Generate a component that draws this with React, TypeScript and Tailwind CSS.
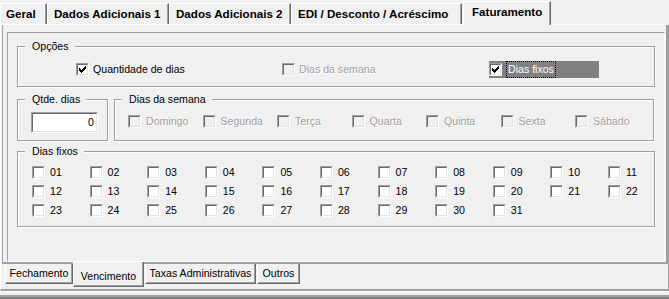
import React from "react";

const CHECK_PATH =
  "M7 1h1v1h-1zM6 2h2v1h-2zM1 3h1v1h-1zM5 3h3v1h-3zM1 4h2v1h-2zM4 4h3v1h-3zM1 5h5v1h-5zM2 6h3v1h-3zM3 7h1v1h-1z";

function CheckBox({ checked = false, disabled = false }: { checked?: boolean; disabled?: boolean }) {
  return (
    <span className="block w-[13px] h-[13px] shrink-0 border border-t-[#a0a0a0] border-l-[#a0a0a0] border-b-white border-r-white">
      <span
        className={`block w-[11px] h-[11px] border border-t-[#696969] border-l-[#696969] border-b-[#e3e3e3] border-r-[#e3e3e3] ${
          disabled ? "bg-[#f0f0f0]" : "bg-white"
        }`}
      >
        {checked && (
          <svg width="9" height="9" viewBox="0 0 9 9" shapeRendering="crispEdges" className="block">
            <path d={CHECK_PATH} fill="#000" />
          </svg>
        )}
      </span>
    </span>
  );
}

function Group({
  label,
  className,
  children,
}: {
  label: string;
  className: string;
  children?: React.ReactNode;
}) {
  return (
    <div
      className={`relative shrink-0 border border-[#a0a0a0] shadow-[inset_1px_1px_0_#fff,1px_1px_0_#fff] ${className}`}
    >
      <span className="absolute left-[7px] -top-[7px] bg-[#f0f0f0] pl-[7px] pr-[6px] leading-[13px] whitespace-nowrap">
        {label}
      </span>
      {children}
    </div>
  );
}

const disabledText = "text-[#a0a0a0] [text-shadow:1px_1px_0_#fff]";

const topTabs = [
  { label: "Geral", cls: "w-[47px] pl-[5px]" },
  { label: "Dados Adicionais 1", cls: "w-[122px] pl-[6px]" },
  { label: "Dados Adicionais 2", cls: "w-[122px] pl-[6px]" },
  { label: "EDI / Desconto / Acréscimo", cls: "w-[171px] pl-[6px]" },
];

const weekDays = ["Domingo", "Segunda", "Terça", "Quarta", "Quinta", "Sexta", "Sábado"];
const days = Array.from({ length: 31 }, (_, i) => String(i + 1).padStart(2, "0"));

export default function App() {
  return (
    <div className="w-[669px] h-[299px] overflow-hidden bg-[#f0f0f0] text-black font-['Liberation_Sans',Arial,sans-serif] text-[10.6px] leading-[13px] select-none">
      {/* top tabs */}
      <div className="flex h-[24px] items-end">
        {topTabs.map((t) => (
          <div
            key={t.label}
            className={`h-[21px] shrink-0 border-t border-l border-r border-t-white border-l-white border-r-[#696969] shadow-[inset_-1px_0_0_#a0a0a0] font-bold text-[11.6px] leading-[14px] pt-[3px] whitespace-nowrap ${t.cls}`}
          >
            {t.label}
          </div>
        ))}
        <div className="relative z-10 -mb-[1px] ml-[1px] h-[24px] w-[88px] shrink-0 bg-[#f0f0f0] border-t border-l border-r border-t-white border-l-white border-r-[#696969] shadow-[inset_-1px_0_0_#a0a0a0] font-bold text-[11.6px] leading-[14px] pt-[3px] pl-[8px] whitespace-nowrap">
          Faturamento
        </div>
      </div>

      {/* outer panel */}
      <div className="h-[267px] border-t border-l border-r border-b-2 border-t-white border-l-white border-r-[#a0a0a0] border-b-[#a0a0a0]">
        {/* inner page body */}
        <div className="ml-[1px] w-[666px] h-[239px] border-l border-r-2 border-b-2 border-l-[#a0a0a0] border-r-[#a0a0a0] border-b-[#a0a0a0] pl-[4px] pt-[7px]">
          <div className="w-[658px] h-[230px] border border-t-[#a0a0a0] border-l-[#a0a0a0] border-b-white border-r-white pl-[9px] pt-[13px]">
            {/* Opções */}
            <Group label="Opções" className="w-[638px] h-[41px]">
              <div className="mt-[14px] ml-[58px] h-[17px] grid grid-cols-[206px_207px_110px] items-center">
                <div className="flex items-center">
                  <CheckBox checked />
                  <span className="ml-[4px] whitespace-nowrap">Quantidade de dias</span>
                </div>
                <div className="flex items-center">
                  <CheckBox disabled />
                  <span className={`ml-[4px] whitespace-nowrap ${disabledText}`}>Dias da semana</span>
                </div>
                <div className="flex items-center h-[17px] w-[110px] bg-[#808080]">
                  <CheckBox checked />
                  <span className="ml-[4px] h-[17px] flex items-center border border-dotted border-black px-[1px] text-white whitespace-nowrap">
                    Dias fixos
                  </span>
                </div>
              </div>
            </Group>

            {/* Qtde + Dias da semana */}
            <div className="mt-[12px] flex gap-[6px]">
              <Group label="Qtde. dias" className="w-[91px] h-[42px]">
                <div className="mt-[12px] ml-[13px] w-[67px] h-[21px] border border-t-[#a0a0a0] border-l-[#a0a0a0] border-b-white border-r-white">
                  <div className="h-full w-full border border-t-[#696969] border-l-[#696969] border-b-[#e3e3e3] border-r-[#e3e3e3] bg-white flex items-center justify-end pr-[2px]">
                    0
                  </div>
                </div>
              </Group>
              <Group label="Dias da semana" className="w-[540px] h-[42px]">
                <div className="mt-[15px] ml-[13px] grid grid-cols-[repeat(7,74.5px)]">
                  {weekDays.map((d) => (
                    <div key={d} className="flex items-center">
                      <CheckBox disabled />
                      <span className={`ml-[5px] whitespace-nowrap ${disabledText}`}>{d}</span>
                    </div>
                  ))}
                </div>
              </Group>
            </div>

            {/* Dias fixos */}
            <Group label="Dias fixos" className="mt-[10px] w-[638px] h-[76px]">
              <div className="mt-[14px] ml-[14px] grid grid-cols-[repeat(11,57.6px)] gap-y-[6px]">
                {days.map((d) => (
                  <div key={d} className="flex items-center h-[13px]">
                    <CheckBox />
                    <span className="ml-[5px]">{d}</span>
                  </div>
                ))}
              </div>
            </Group>
          </div>
        </div>

        {/* bottom tabs */}
        <div className="flex items-start h-[25px] pl-[4px]">
          <div className="w-[68px] h-[20px] shrink-0 border-l border-r border-b border-l-white border-r-[#696969] border-b-[#696969] shadow-[inset_-1px_-1px_0_#a0a0a0] flex items-center justify-center whitespace-nowrap">
            Fechamento
          </div>
          <div className="relative z-10 -mt-[2px] w-[71px] h-[25px] shrink-0 bg-[#f0f0f0] border-l border-r border-b border-l-white border-r-[#696969] border-b-[#696969] shadow-[inset_-1px_-1px_0_#a0a0a0] flex justify-center pt-[8px] whitespace-nowrap">
            Vencimento
          </div>
          <div className="ml-[1px] w-[111px] h-[20px] shrink-0 border-l border-r border-b border-l-white border-r-[#696969] border-b-[#696969] shadow-[inset_-1px_-1px_0_#a0a0a0] flex items-center justify-center whitespace-nowrap">
            Taxas Administrativas
          </div>
          <div className="ml-[1px] w-[43px] h-[20px] shrink-0 border-l border-r border-b border-l-white border-r-[#696969] border-b-[#696969] shadow-[inset_-1px_-1px_0_#a0a0a0] flex items-center justify-center whitespace-nowrap">
            Outros
          </div>
        </div>
      </div>

      {/* bottom edge */}
      <div className="h-[8px] border-t border-t-white pt-[3px]">
        <div className="h-[4px] border-t-2 border-b-2 border-t-[#a0a0a0] border-b-[#808080]" />
      </div>
    </div>
  );
}
